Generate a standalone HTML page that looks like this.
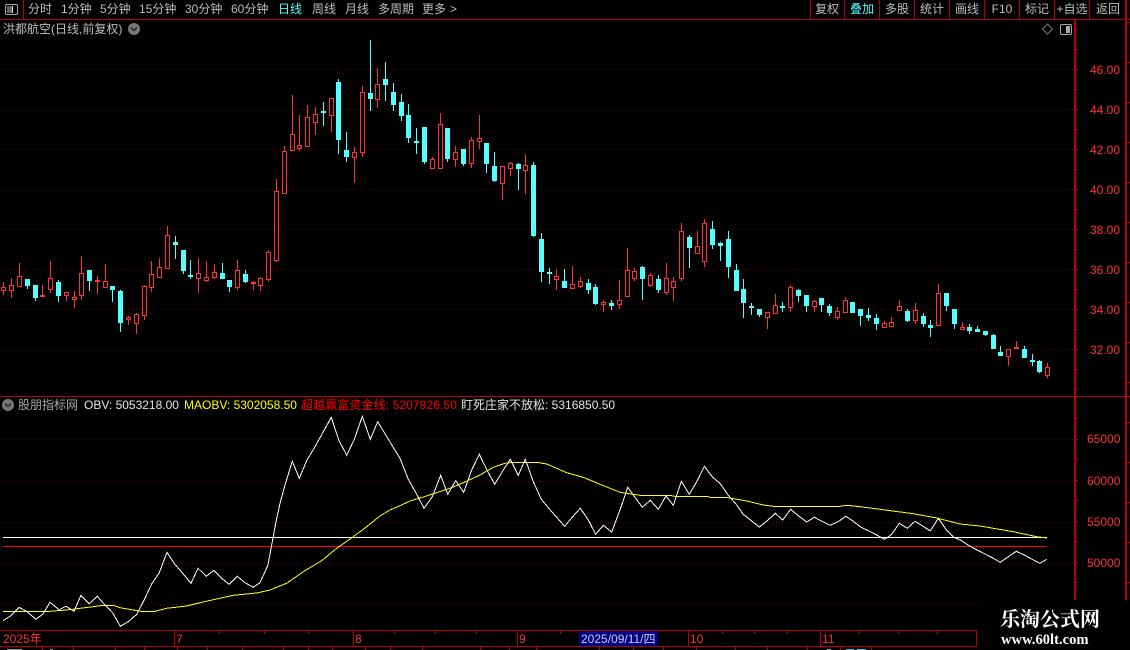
<!DOCTYPE html>
<html lang="zh">
<head>
<meta charset="utf-8">
<title>洪都航空</title>
<style>
html,body{margin:0;padding:0;background:#000}
#app{position:relative;width:1130px;height:650px;overflow:hidden;background:#000;font:12px "Liberation Sans","WenQuanYi Zen Hei","Noto Sans CJK SC",sans-serif;color:#bdbdbd}
#app svg.base{position:absolute;left:0;top:0}
.t{position:absolute;white-space:nowrap;line-height:14px;height:14px}
.c{color:#54ffff}
.r{color:#ff3232}
.y{color:#ffff00}
.w{color:#e6e6e6}
.ctr{transform:translateX(-50%)}
.wm{font-family:"Liberation Serif","Noto Serif CJK SC",serif;font-weight:bold;color:#fff}
</style>
</head>
<body>
<div id="app">
<svg class="base" id="s" width="1130" height="650" viewBox="0 0 1130 650" xmlns="http://www.w3.org/2000/svg" shape-rendering="crispEdges"></svg>

<span class="t" style="left:28px;top:2px">分时</span>
<span class="t" style="left:61px;top:2px">1分钟</span>
<span class="t" style="left:100px;top:2px">5分钟</span>
<span class="t" style="left:139px;top:2px">15分钟</span>
<span class="t" style="left:185px;top:2px">30分钟</span>
<span class="t" style="left:231px;top:2px">60分钟</span>
<span class="t c" style="left:278px;top:2px">日线</span>
<span class="t" style="left:312px;top:2px">周线</span>
<span class="t" style="left:345px;top:2px">月线</span>
<span class="t" style="left:378px;top:2px">多周期</span>
<span class="t" style="left:422px;top:2px">更多</span>
<span class="t" style="left:450px;top:2px">&gt;</span>

<span class="t ctr" style="left:827px;top:2px">复权</span>
<span class="t ctr c" style="left:862px;top:2px">叠加</span>
<span class="t ctr" style="left:897px;top:2px">多股</span>
<span class="t ctr" style="left:932px;top:2px">统计</span>
<span class="t ctr" style="left:967px;top:2px">画线</span>
<span class="t ctr" style="left:1002px;top:2px">F10</span>
<span class="t ctr" style="left:1037px;top:2px">标记</span>
<span class="t ctr" style="left:1072px;top:2px">+自选</span>
<span class="t ctr" style="left:1108px;top:2px">返回</span>

<span class="t" style="left:3px;top:22px">洪都航空(日线,前复权)</span>

<span class="t r" style="left:1090px;top:63px">46.00</span>
<span class="t r" style="left:1090px;top:103px">44.00</span>
<span class="t r" style="left:1090px;top:143px">42.00</span>
<span class="t r" style="left:1090px;top:183px">40.00</span>
<span class="t r" style="left:1090px;top:223px">38.00</span>
<span class="t r" style="left:1090px;top:263px">36.00</span>
<span class="t r" style="left:1090px;top:303px">34.00</span>
<span class="t r" style="left:1090px;top:343px">32.00</span>

<span class="t" style="left:18px;top:398px;color:#a8a8a8">股朋指标网</span>
<span class="t w" style="left:84px;top:398px">OBV: 5053218.00</span>
<span class="t y" style="left:184px;top:398px">MAOBV: 5302058.50</span>
<span class="t" style="left:301px;top:398px;color:#ff0000;letter-spacing:.1px">超越赢富资金线: 5207926.50</span>
<span class="t w" style="left:461px;top:398px">盯死庄家不放松: 5316850.50</span>

<span class="t r" style="left:1087px;top:432px">65000</span>
<span class="t r" style="left:1087px;top:474px">60000</span>
<span class="t r" style="left:1087px;top:515px">55000</span>
<span class="t r" style="left:1087px;top:556px">50000</span>

<span class="t r" style="left:3px;top:632px">2025年</span>
<span class="t r" style="left:176px;top:632px">7</span>
<span class="t r" style="left:355px;top:632px">8</span>
<span class="t r" style="left:519px;top:632px">9</span>
<span class="t" style="left:581px;top:632px;color:#c8c8ff">2025/09/11/四</span>
<span class="t r" style="left:690px;top:632px">10</span>
<span class="t r" style="left:822px;top:632px">11</span>

<span class="t wm" style="left:1000px;top:610px;font-size:20px;line-height:20px;height:20px">乐淘公式网</span>
<span class="t wm" style="left:1001px;top:633px;font-size:14.6px">www.60lt.com</span>
</div>

<script>
(function(){
var NS="http://www.w3.org/2000/svg",s=document.getElementById("s");
function el(n,a){var e=document.createElementNS(NS,n);for(var k in a)e.setAttribute(k,a[k]);s.appendChild(e);return e;}
function R(x,y,w,h,f){el("rect",{x:x,y:y,width:w,height:h,fill:f});}
var L="#b80000",RED="#ff3232",CY="#54ffff";

/* grid */
[69,109,149,189,229,269,309,349,439,481,522,563,604].forEach(function(y){
  el("line",{x1:0,x2:1075,y1:y+.5,y2:y+.5,stroke:"#6e0000","stroke-width":1,"stroke-dasharray":"1 3"});
});

/* frame */
R(0,19,1130,1,L);
R(0,396,1130,1,L);
R(23,0,1,19,L);
[810,844,879,914,949,984,1019,1054,1089].forEach(function(x){R(x,0,1,19,L);});
R(1074,20,2,580,L);
R(1125,0,2,600,L);
for(var y=29;y<396;y+=20)R(1076,y,2,1,L);
for(var y=418;y<600;y+=20.5)R(1076,Math.round(y),2,1,L);
for(var y=22;y<600;y+=40)R(1127,y,3,1,L);

/* time axis */
R(0,630,977,1,L);R(0,646,977,1,L);R(976,630,1,17,L);
[174,353,517,688,820].forEach(function(x){R(x,630,1,16,L);});
[219,264,308,394,435,476,560,722,754,787,859,898,937].forEach(function(x){R(x,631,1,3,L);});
[42,73,115,144,177,207,242,283,308,332,365,390,422,480,509,536,599,633,663,696,735,767,807,840,871].forEach(function(x){R(x,647,1,3,L);});
R(579,631,79,15,"#000080");
/* clipped text below the axis */
R(7,649,15,1,"#999");R(50,649,3,1,"#999");R(827,649,4,1,"#999");R(846,649,8,1,"#54cccc");R(857,649,9,1,"#54cccc");

/* candles: [r/c 1=red, xz, high, top, bottom, low] in zoom coordinates */
function seg(xo,yo,list){
 list.forEach(function(d){
  var up=d[0],col=Math.floor(xo+d[1]/3),h=Math.round(yo+d[2]/3),t=Math.round(yo+d[3]/3),b=Math.round(yo+d[4]/3),l=Math.round(yo+d[5]/3);
  var c=up?RED:CY;
  if(l>h)R(col,h,1,l-h+1,c);
  if(b-t<1)b=t+1;
  R(col-2,t,5,b-t+1,c);
  if(up&&b-t>=2)R(col-1,t+1,3,b-t-1,"#000");
 });
}
seg(0,220,[[1,10,186,202,209,222],[1,34,174,196,209,231],[1,58,129,169,197,197],[0,82,177,177,195,204],[0,106,195,195,231,240],[1,127,195,226,228,228],[1,151,123,175,206,216],[0,175,180,186,225,243],[1,199,216,217,224,240],[1,223,213,232,236,261],[1,244,108,160,224,237],[0,268,150,150,180,210],[1,292,168,180,183,219],[1,316,132,184,200,200],[0,337,198,198,207,243],[0,361,210,213,306,333],[1,385,288,291,297,312],[1,409,279,283,308,339],[1,433,195,199,285,297],[1,454,123,163,200,213],[1,478,114,142,170,170],[1,502,18,46,143,143],[0,526,48,66,72,114],[0,550,90,90,150,159],[0,571,120,166,169,174],[1,595,114,158,173,216],[1,619,123,172,179,183],[1,643,132,157,170,174],[0,667,129,159,174,174],[0,688,180,180,198,213],[1,712,120,151,201,207],[0,736,150,162,183,186],[1,760,183,185,188,207],[1,781,171,175,194,210],[1,805,90,97,177,183]]);
seg(270,35,[[1,19,432,469,675,678],[1,43,333,349,475,475],[1,67,180,298,344,344],[1,88,240,331,338,345],[1,112,210,247,332,332],[1,136,216,238,260,297],[0,160,201,228,231,270],[1,184,190,190,239,288],[0,205,132,141,312,354],[0,229,291,345,363,378],[1,253,336,352,365,441],[1,277,153,172,350,363],[0,301,15,174,189,225],[1,322,99,148,191,216],[0,346,81,132,147,195],[0,370,144,171,207,225],[0,394,177,201,240,255],[0,415,207,240,306,321],[0,439,279,318,321,354],[0,463,276,276,378,384],[1,487,366,373,398,398],[1,511,234,268,398,398],[0,532,279,279,369,378],[1,556,333,352,371,393],[0,580,342,342,384,390],[1,604,306,316,383,396],[1,628,240,310,317,340],[0,649,324,324,384,411],[0,673,351,393,435,438],[1,697,394,394,445,492],[1,721,381,385,398,420],[0,745,384,387,399,462],[1,766,357,391,404,474],[0,790,381,390,600,603]]);
seg(530,210,[[0,34,69,87,183,213],[0,58,174,187,190,219],[1,79,180,199,208,237],[0,103,177,213,231,231],[1,127,168,223,233,233],[1,151,201,214,227,231],[0,175,207,219,237,249],[0,196,222,231,279,282],[1,220,270,277,281,303],[0,244,270,279,285,297],[1,268,210,271,281,294],[1,292,114,181,257,257],[1,313,174,184,204,210],[0,337,168,171,204,267],[1,361,189,196,224,228],[0,385,195,207,237,246],[1,409,159,205,245,252],[1,430,201,214,230,270],[1,454,39,64,204,210],[0,478,75,81,111,171],[1,502,63,109,128,128],[1,523,27,40,152,168],[0,547,33,57,102,114],[0,571,96,99,105,150],[0,595,63,87,168,201],[0,619,162,180,240,240],[0,640,207,237,276,321],[0,664,279,288,291,312],[0,688,297,297,312,318],[1,712,307,307,320,354],[1,736,252,286,308,308],[0,757,276,288,291,303],[1,781,225,232,290,303],[0,805,237,240,255,273],[0,829,255,255,285,303],[1,853,270,274,287,303]]);
seg(780,270,[[0,124,84,84,102,123],[0,148,102,108,126,135],[1,172,111,124,140,147],[1,196,81,91,125,125],[0,217,96,96,126,126],[0,241,117,117,135,165],[0,265,114,135,141,150],[0,289,132,144,159,177],[1,313,153,160,171,171],[1,334,141,157,167,167],[1,358,90,109,119,119],[0,382,117,123,150,153],[1,406,99,121,149,159],[0,430,129,138,159,168],[0,451,150,165,171,198],[1,475,42,70,164,164],[0,499,69,69,105,120],[0,523,117,117,159,174],[1,547,156,171,177,177],[0,568,162,171,180,189],[0,592,168,177,183,183],[0,616,183,183,192,195],[0,640,192,195,234,234],[0,661,228,246,255,255],[1,685,238,238,257,285],[1,709,213,231,234,234],[0,733,228,237,261,261],[0,757,252,269,272,285],[0,778,270,273,303,306],[1,802,279,292,315,321]]);

/* horizontal index lines */
R(3,537,1044,1,"#ffffff");
R(3,546,1044,1,"#ff0000");

/* polylines */
function pts(xo,yo,a){var o=[];for(var i=0;i<a.length;i+=2)o.push((xo+a[i]/3).toFixed(1)+","+(yo+a[i+1]/3).toFixed(1));return o;}
var white=[].concat(
 pts(0,410,[9,632,33,617,57,592,81,605,108,628,129,612,150,577,177,599,198,589,222,604,243,556,268,581,292,559,315,585,339,610,361,649,385,635,411,612,435,565,456,520,477,490,501,427,525,463,549,491,573,520,594,475,619,499,642,481,665,505,687,523,712,499,735,518,760,532,780,518,804,465,816,400,828,335,840,280,855,225,877,154,898,205,921,150,945,110,970,65,994,22,1016,90,1040,136,1063,88,1087,19,1111,88,1133,35,1157,75]),
 pts(400,440,[0,55,25,118,50,163,72,205,97,170,122,106,143,163,167,122,191,157,215,90,238,43,262,92,284,133,310,90,331,58,355,106,376,58,400,125,424,178,445,203,470,232,494,259,518,230,541,205,565,240,587,283,610,256,635,276,660,210,683,142,705,172,727,202,751,181,775,208,798,168,820,196,844,124,868,163,892,122,913,79,938,112,960,130,985,166,1010,195,1030,223,1055,243,1078,261,1102,242,1126,220,1148,240]),
 pts(780,420,[32,268,56,288,80,306,103,292,126,304,150,316,173,306,197,289,220,304,243,322,267,333,290,345,314,358,335,343,358,310,382,325,405,304,428,318,451,333,475,295,498,328,522,352,545,362,570,379,592,390,615,402,638,414,661,427,685,410,709,394,733,405,756,418,780,430,800,418])
);
var yellow=[].concat(
 pts(0,410,[9,605,135,605,160,603,200,600,240,595,280,590,310,586,340,586,360,593,400,600,430,605,465,604,500,595,560,588,600,578,640,569,700,556,770,549,810,540,860,520,910,485,965,452,1010,415,1060,380,1100,350,1140,318,1170,300]),
 pts(400,440,[0,197,30,183,60,174,110,158,150,145,190,128,240,105,280,82,315,70,340,67,410,67,440,72,470,85,500,98,550,112,600,133,660,157,720,166,810,166,830,170,925,170,935,173,985,173,1040,183,1090,195,1120,199]),
 pts(780,420,[0,259,180,259,200,256,230,259,300,268,400,281,470,294,540,312,600,318,700,335,770,350,800,354])
);
el("polyline",{points:yellow.join(" "),fill:"none",stroke:"#ffff00","stroke-width":1});
el("polyline",{points:white.join(" "),fill:"none",stroke:"#ffffff","stroke-width":1});

/* icons */
el("rect",{x:5.5,y:4.5,width:12,height:10,rx:1.5,fill:"none",stroke:"#aaa","stroke-width":1,"shape-rendering":"auto"});
R(7,6,5,7,"#666");R(12,6,1,7,"#ddd");
el("rect",{x:1060.5,y:24.5,width:11,height:10,rx:1.5,fill:"none",stroke:"#aaa","stroke-width":1,"shape-rendering":"auto"});
R(1066,26,4,7,"#aaa");
el("path",{d:"M1047.5 24 L1052.5 29 L1047.5 34 L1042.5 29 Z",fill:"none",stroke:"#777","stroke-width":1,"shape-rendering":"auto"});
el("circle",{cx:134,cy:29,r:6,fill:"#777","shape-rendering":"auto"});
el("path",{d:"M131 27.5 L134 30.5 L137 27.5",fill:"none",stroke:"#222","stroke-width":1.4,"shape-rendering":"auto"});
el("circle",{cx:8,cy:405,r:6,fill:"#777","shape-rendering":"auto"});
el("path",{d:"M5 403.5 L8 406.5 L11 403.5",fill:"none",stroke:"#222","stroke-width":1.4,"shape-rendering":"auto"});

/* mask lower right behind watermark */
R(977,601,153,49,"#000");
})();
</script>
</body>
</html>
